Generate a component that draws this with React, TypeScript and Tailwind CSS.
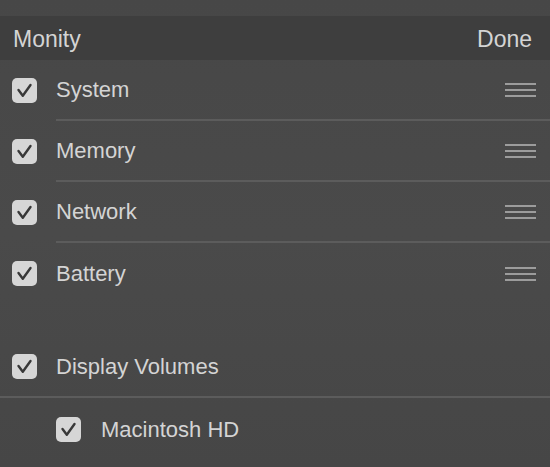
import { useState } from 'react';

type Item = { id: string; label: string };

const monitors: Item[] = [
  { id: 'system', label: 'System' },
  { id: 'memory', label: 'Memory' },
  { id: 'network', label: 'Network' },
  { id: 'battery', label: 'Battery' },
];

function CheckBox({ checked, onToggle }: { checked: boolean; onToggle: () => void }) {
  return (
    <button
      onClick={onToggle}
      className="w-[25px] h-[25px] rounded-[5px] bg-[#d6d6d6] flex items-center justify-center shrink-0"
    >
      {checked && (
        <svg width="25" height="25" viewBox="0 0 25 25">
          <path d="M6.5 12 L10.8 17.8 L18.5 7" fill="none" stroke="#383838" strokeWidth="2.4" strokeLinecap="round" strokeLinejoin="round" />
        </svg>
      )}
    </button>
  );
}

function DragHandle() {
  return (
    <div className="flex flex-col gap-[4px] w-[31px]">
      <div className="h-[2px] bg-[#9c9c9c]" />
      <div className="h-[2px] bg-[#9c9c9c]" />
      <div className="h-[2px] bg-[#9c9c9c]" />
    </div>
  );
}

export default function App() {
  const [checked, setChecked] = useState<Record<string, boolean>>({
    system: true,
    memory: true,
    network: true,
    battery: true,
    volumes: true,
    mac: true,
  });

  const toggle = (id: string) => setChecked((c) => ({ ...c, [id]: !c[id] }));

  return (
    <div
      className="w-[550px] h-[467px] overflow-hidden bg-gradient-to-b from-[#474747] via-[#4a4a4a] to-[#464646] text-[#d4d4d4] text-[22px]"
      style={{ fontFamily: '"Liberation Sans", Arial, sans-serif' }}
    >
      <div className="h-[16px]" />

      {/* Header */}
      <div className="h-[44px] bg-[#3e3e3e] flex items-center justify-between pl-[13px] pr-[18px]">
        <span className="text-[23px] pt-[2px]">Monity</span>
        <button className="text-[23px] pt-[2px] text-[#d4d4d4]">Done</button>
      </div>

      {/* Monitors */}
      <div>
        {monitors.map((m, i) => (
          <div key={m.id} className="flex">
            <div className="w-[56px] flex items-center pl-[12px]">
              <CheckBox checked={checked[m.id]} onToggle={() => toggle(m.id)} />
            </div>
            <div
              className={`flex-1 h-[61px] flex items-center justify-between pr-[14px] ${
                i < monitors.length - 1 ? 'border-b-2 border-[#5c5c5c]' : ''
              }`}
            >
              <span>{m.label}</span>
              <DragHandle />
            </div>
          </div>
        ))}
      </div>

      <div className="h-[32px]" />

      {/* Volumes */}
      <div className="h-[62px] flex items-center border-b-2 border-[#5c5c5c]">
        <div className="w-[56px] flex items-center pl-[12px]">
          <CheckBox checked={checked.volumes} onToggle={() => toggle('volumes')} />
        </div>
        <span>Display Volumes</span>
      </div>
      <div className="h-[62px] flex items-center">
        <div className="w-[101px] flex items-center pl-[56px]">
          <CheckBox checked={checked.mac} onToggle={() => toggle('mac')} />
        </div>
        <span>Macintosh HD</span>
      </div>
    </div>
  );
}
